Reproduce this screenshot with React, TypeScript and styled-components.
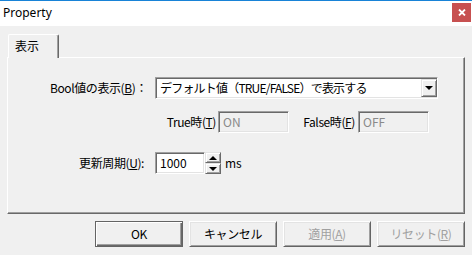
import React from 'react';
import styled, { createGlobalStyle } from 'styled-components';

const FONT = `"Noto Sans CJK JP", "Noto Sans", sans-serif`;
const TITLE_FONT = `"Noto Sans", "Open Sans", sans-serif`;

const Global = createGlobalStyle`
  html, body { margin: 0; padding: 0; background: #f0f0f0; }
  body { font-family: ${FONT}; font-size: 12px; color: #000; }
  * { box-sizing: border-box; }
`;

const Window = styled.div`
  width: 472px;
  height: 255px;
  display: flex;
  flex-direction: column;
  background: #f0f0f0;
  overflow: hidden;
`;

const TitleBar = styled.div`
  height: 26px;
  flex: none;
  border-top: 1px solid #1883d7;
  background: #fff;
  display: flex;
  align-items: flex-start;
  justify-content: space-between;
  padding-left: 3px;
`;

const Title = styled.span`
  font-family: ${TITLE_FONT};
  font-size: 12px;
  line-height: 23px;
  color: #000;
`;

const CloseButton = styled.div`
  width: 19px;
  height: 19px;
  margin: 2px 1px 0 0;
  background: #c75050;
  display: flex;
  align-items: center;
  justify-content: center;
`;

const Body = styled.div`
  flex: 1;
  display: flex;
  flex-direction: column;
  padding: 8px 7px 0 7px;
`;

const TabStrip = styled.div`
  height: 23px;
  display: flex;
  padding-left: 1px;
  position: relative;
  z-index: 1;
`;

const Tab = styled.div`
  width: 51px;
  height: 24px;
  background: #f0f0f0;
  border-top: 1px solid #fff;
  border-left: 1px solid #fff;
  border-right: 1px solid #696969;
  border-top-left-radius: 2px;
  border-top-right-radius: 2px;
  box-shadow: inset -1px 0 #a0a0a0;
  padding: 3px 0 0 6px;
  font-size: 12px;
  line-height: 16px;
`;

const Panel = styled.div`
  height: 157px;
  border-top: 1px solid #fff;
  border-left: 1px solid #fff;
  border-right: 1px solid #696969;
  border-bottom: 1px solid #696969;
  box-shadow: inset -1px -1px #a0a0a0;
  padding-top: 19px;
  display: flex;
  flex-direction: column;
`;

const Row = styled.div<{ $top?: number; $indent?: number }>`
  display: flex;
  align-items: center;
  height: 22px;
  margin-top: ${(p) => p.$top ?? 0}px;
  padding-left: ${(p) => p.$indent ?? 0}px;
`;

const Label = styled.label<{ $width: number; $gap?: number; $pad?: number }>`
  width: ${(p) => p.$width}px;
  flex: none;
  text-align: right;
  margin-right: ${(p) => p.$gap ?? 0}px;
  padding-right: ${(p) => p.$pad ?? 0}px;
  white-space: nowrap;
  line-height: 16px;
  letter-spacing: -0.4px;
`;

const Sunken = styled.div<{ $width: number; $disabled?: boolean }>`
  width: ${(p) => p.$width}px;
  height: 22px;
  flex: none;
  border-top: 1px solid #a0a0a0;
  border-left: 1px solid #a0a0a0;
  border-right: 1px solid #fff;
  border-bottom: 1px solid #fff;
  box-shadow: inset 1px 1px #696969, inset -1px -1px #e3e3e3;
  background: ${(p) => (p.$disabled ? '#f0f0f0' : '#fff')};
  color: ${(p) => (p.$disabled ? '#8a8a8a' : '#000')};
  display: flex;
  align-items: center;
  padding: 2px 2px 2px 4px;
  line-height: 16px;
  white-space: nowrap;
`;

const ComboText = styled.span`
  flex: 1;
  overflow: hidden;
  letter-spacing: -0.8px;
`;

const Raised = styled.div<{ $w: number; $h: number }>`
  width: ${(p) => p.$w}px;
  height: ${(p) => p.$h}px;
  flex: none;
  background: #f0f0f0;
  border-top: 1px solid #e3e3e3;
  border-left: 1px solid #e3e3e3;
  border-right: 1px solid #696969;
  border-bottom: 1px solid #696969;
  box-shadow: inset 1px 1px #fff, inset -1px -1px #a0a0a0;
  display: flex;
  align-items: center;
  justify-content: center;
`;

const DropButton = styled(Raised)`
  margin-right: -2px;
`;

const SpinGroup = styled.div`
  display: flex;
  flex-direction: column;
  height: 22px;
  margin-right: 4px;
`;

const Arrow = styled.div<{ $up?: boolean }>`
  width: 0;
  height: 0;
  border-left: 4px solid transparent;
  border-right: 4px solid transparent;
  ${(p) => (p.$up ? 'border-bottom: 4px solid #000;' : 'border-top: 4px solid #000;')}
`;

const Unit = styled.span`
  line-height: 16px;
`;

const ButtonRow = styled.div`
  display: flex;
  justify-content: flex-end;
  gap: 6px;
  margin-top: 7px;
`;

const Button = styled.button<{ $default?: boolean }>`
  width: 88px;
  height: 26px;
  font-family: ${FONT};
  font-size: 12px;
  letter-spacing: -0.4px;
  padding: 0;
  background: #f0f0f0;
  color: ${(p) => (p.disabled ? '#a0a0a0' : '#000')};
  border-top: 1px solid ${(p) => (p.$default ? '#646464' : '#fff')};
  border-left: 1px solid ${(p) => (p.$default ? '#646464' : '#fff')};
  border-right: 1px solid #646464;
  border-bottom: 1px solid #646464;
  box-shadow: ${(p) =>
    p.$default
      ? 'inset 1px 1px #fff, inset -1px -1px #696969, inset -2px -2px #a0a0a0'
      : 'inset 1px 1px #e3e3e3, inset -1px -1px #a0a0a0'};
  line-height: 16px;
`;

export default function App() {
  return (
    <>
      <Global />
      <Window>
        <TitleBar>
          <Title>Property</Title>
          <CloseButton>
            <svg width="8" height="7" viewBox="0 0 8 7">
              <path d="M1 0.5 L7 6.5 M7 0.5 L1 6.5" stroke="#fff" strokeWidth="1.8" />
            </svg>
          </CloseButton>
        </TitleBar>
        <Body>
          <TabStrip>
            <Tab>表示</Tab>
          </TabStrip>
          <Panel>
            <Row>
              <Label $width={139} $gap={8}>
                Bool値の表示(<u>B</u>)：
              </Label>
              <Sunken $width={283}>
                <ComboText>デフォルト値（TRUE/FALSE）で表示する</ComboText>
                <DropButton $w={16} $h={18}>
                  <Arrow />
                </DropButton>
              </Sunken>
            </Row>
            <Row $top={12} $indent={147}>
              <Label $width={61} $gap={2}>
                True時(<u>T</u>)
              </Label>
              <Sunken $width={71} $disabled>
                ON
              </Sunken>
              <Label $width={66} $gap={3}>
                False時(<u>F</u>)
              </Label>
              <Sunken $width={71} $disabled>
                OFF
              </Sunken>
            </Row>
            <Row $top={19}>
              <Label $width={139} $gap={8} $pad={3}>
                更新周期(<u>U</u>):
              </Label>
              <Sunken $width={50}>1000</Sunken>
              <SpinGroup>
                <Raised $w={16} $h={11}>
                  <Arrow $up />
                </Raised>
                <Raised $w={16} $h={11}>
                  <Arrow />
                </Raised>
              </SpinGroup>
              <Unit>ms</Unit>
            </Row>
          </Panel>
          <ButtonRow>
            <Button $default>OK</Button>
            <Button>キャンセル</Button>
            <Button disabled>
              適用(<u>A</u>)
            </Button>
            <Button disabled>
              リセット(<u>R</u>)
            </Button>
          </ButtonRow>
        </Body>
      </Window>
    </>
  );
}
